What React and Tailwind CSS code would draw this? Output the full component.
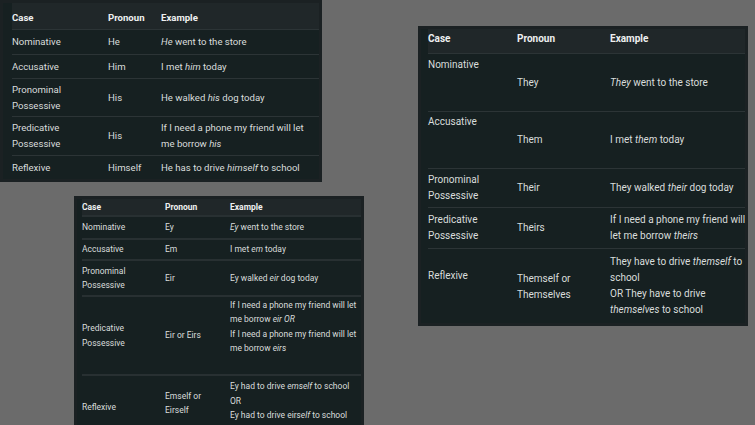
import React from "react";

const t1 = {
    rows: [
        { h: "h-[25px]", c: ["Nominative"], p: ["He"], e: [<><i>He</i> went to the store</>] },
        { h: "h-[24px]", c: ["Accusative"], p: ["Him"], e: [<>I met <i>him</i> today</>] },
        { h: "h-[38px]", c: ["Pronominal", "Possessive"], p: ["His"], e: [<>He walked <i>his</i> dog today</>] },
        {
            h: "h-[39px]",
            c: ["Predicative", "Possessive"],
            p: ["His"],
            e: ["If I need a phone my friend will let", <>me borrow <i>his</i></>],
        },
        { h: "h-[24px]", c: ["Reflexive"], p: ["Himself"], e: [<>He has to drive <i>himself</i> to school</>] },
    ],
};

const t2 = {
    rows: [
        { h: "h-[23px]", c: ["Nominative"], p: ["Ey"], e: [<><i>Ey</i> went to the store</>] },
        { h: "h-[21px]", c: ["Accusative"], p: ["Em"], e: [<>I met <i>em</i> today</>] },
        { h: "h-[36px]", c: ["Pronominal", "Possessive"], p: ["Eir"], e: [<>Ey walked <i>eir</i> dog today</>] },
        {
            h: "h-[79px]",
            c: ["Predicative", "Possessive"],
            p: ["Eir or Eirs"],
            e: [
                "If I need a phone my friend will let",
                <>me borrow <i>eir OR</i></>,
                "If I need a phone my friend will let",
                <>me borrow <i>eirs</i></>,
            ],
            ePad: "pb-[18px]",
        },
        {
            h: "h-[52px]",
            c: ["Reflexive"],
            p: ["Emself or", "Eirself"],
            e: [
                <>Ey had to drive <i>emself</i> to school</>,
                "OR",
                <>Ey had to drive eir<i>self</i> to school</>,
            ],
            cPad: "pt-[12px]",
            pPad: "pt-[4px]",
        },
    ],
};

const t3 = {
    rows: [
        { h: "h-[58px]", c: ["Nominative"], cPad: "pb-[36px]", p: ["They"], e: [<><i>They</i> went to the store</>] },
        { h: "h-[57px]", c: ["Accusative"], cPad: "pb-[36px]", p: ["Them"], e: [<>I met <i>them</i> today</>] },
        { h: "h-[39px]", c: ["Pronominal", "Possessive"], p: ["Their"], e: [<>They walked <i>their</i> dog today</>] },
        {
            h: "h-[41px]",
            c: ["Predicative", "Possessive"],
            p: ["Theirs"],
            e: ["If I need a phone my friend will", <>let me borrow <i>theirs</i></>],
        },
        {
            h: "h-[74px]",
            c: ["Reflexive"],
            cPad: "pb-[20px]",
            p: ["Themself or", "Themselves"],
            pPad: "pt-[2px]",
            e: [
                <>They have to drive <i>themself</i> to</>,
                "school",
                "OR They have to drive",
                <><i>themselves</i> to school</>,
            ],
        },
    ],
};

function Cell({ lines, width, pad }) {
    return (
        <div className={`flex shrink-0 flex-col justify-center ${width || ""} ${pad || ""}`}>
            {lines.map((l, i) => (
                <span key={i} className="whitespace-nowrap">
                    {l}
                </span>
            ))}
        </div>
    );
}

function PronounTable({ data, cols, head, text, border, className }) {
    return (
        <div
            className={`absolute overflow-hidden border-[3px] border-[#1b2123] bg-[#162021] text-[#d9dddc] ${text} ${className}`}
        >
            <div className={`flex items-center bg-[#202729] font-bold text-[#eef0f0] ${head}`}>
                <div className={`shrink-0 ${cols[0]}`}>Case</div>
                <div className={`shrink-0 ${cols[1]}`}>Pronoun</div>
                <div>Example</div>
            </div>
            {data.rows.map((r, i) => (
                <div key={i} className={`flex ${border} ${r.h}`}>
                    <Cell lines={r.c} width={cols[0]} pad={r.cPad} />
                    <Cell lines={r.p} width={cols[1]} pad={r.pPad} />
                    <Cell lines={r.e} pad={r.ePad} />
                </div>
            ))}
        </div>
    );
}

export default function App() {
    return (
        <div className="relative h-[425px] w-[755px] overflow-hidden bg-[#6b6b6b] font-[Roboto,'Liberation_Sans',sans-serif]">
            <PronounTable
                data={t1}
                cols={["w-[96px]", "w-[53px]"]}
                head="h-[26px] pt-[4px]"
                text="text-[9.6px] leading-[16px]"
                border="border-t border-[#2c3436]"
                className="left-0 top-0 h-[182px] w-[322px] pl-[9px]"
            />
            <PronounTable
                data={t2}
                cols={["w-[83px]", "w-[65px]"]}
                head="h-[16px]"
                text="text-[8.5px] leading-[14.5px]"
                border="border-t-2 border-[#283032]"
                className="left-[74px] top-[196px] h-[240px] w-[290px] pl-[5px]"
            />
            <PronounTable
                data={t3}
                cols={["w-[89px]", "w-[93px]"]}
                head="h-[24px] pb-[4px]"
                text="text-[10px] leading-[16px]"
                border="border-t border-[#2c3436]"
                className="left-[418px] top-[26px] h-[300px] w-[330px] pl-[7px]"
            />
        </div>
    );
}
